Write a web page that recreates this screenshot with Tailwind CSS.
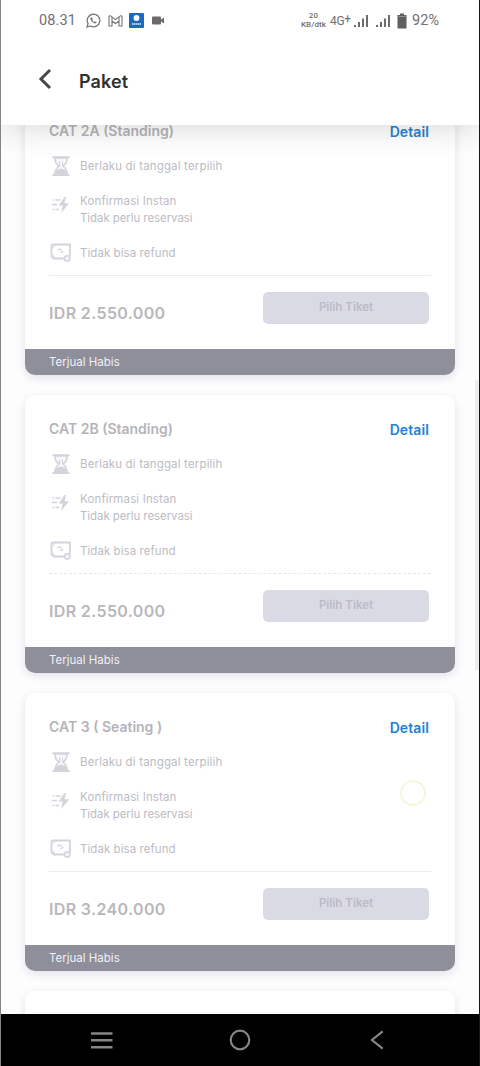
<!DOCTYPE html>
<html lang="id">
<head>
<meta charset="utf-8">
<meta name="viewport" content="width=device-width, initial-scale=1">
<title>Paket</title>
<script src="https://cdn.jsdelivr.net/npm/@tailwindcss/browser@4"></script>
</head>
<body class="bg-white">
<svg class="hidden">
  <symbol id="hourglass" viewBox="0 0 22 22">
    <path d="M3.500 2.200h17M3.500 20h17" stroke="#d3d3dc" stroke-width="2" fill="none"/>
    <path d="M6 3c0 5 1.500 6 4 8-2.500 2-4 4-4 8h12c0-4-1.500-6-4-8 2.500-2 4-3 4-8z" fill="#f8f8fb" stroke="#d3d3dc" stroke-width="1.600"/>
    <path d="M5 19.500c.5-3.500 3-5 7-6 4 1 6.500 2.500 7 6zM10 6.500h1.200v5H10zM13 6.500h1v4l-1 1z" fill="#d3d3dc"/>
  </symbol>
  <symbol id="bolt" viewBox="0 0 22 22">
    <path d="M15.500 3 9.700 11.500h4L12.200 19 20 9.200h-4.500L17 3z" fill="#d3d3dc"/>
    <path d="M4 6h.5M7 6h4M3.500 10.500h4M4 15.500h.5M7 15.500h2.500" stroke="#d3d3dc" stroke-width="1.500" stroke-linecap="round"/>
  </symbol>
  <symbol id="refund" viewBox="0 0 22 22">
    <path d="M15 17.500H5L2.500 15.500V4.500l1-1H21V15" fill="none" stroke="#d3d3dc" stroke-width="1.800"/>
    <path d="M5.500 4.500a3 3 0 0 1-2 2.500M5.500 16.500a3 3 0 0 0-2-2.500" fill="none" stroke="#d3d3dc" stroke-width="1"/>
    <path d="M8.500 9.500c1-2 3-1.500 4-.3M11.500 11.500c1 0 2-.5 2.500-1.500" fill="none" stroke="#d3d3dc" stroke-width="1.400"/>
    <circle cx="18.200" cy="17.400" r="2.700" fill="#f5f5f9" stroke="#d3d3dc" stroke-width="1.500"/>
  </symbol>
</svg>
<div class="relative flex h-[1066px] w-[480px] flex-col overflow-hidden border-l border-[#858585] bg-[#fdfdfe] font-['Inter',sans-serif]">
  <header class="z-10 h-[125px] shrink-0 bg-white shadow-[0_2px_32px_rgba(0,0,0,0.16)]">
    <div class="flex h-[41px] items-center pl-[38px] font-['Roboto',sans-serif] text-[#707070]">
      <span class="w-[37px] text-[14.5px] tracking-[0.1px] whitespace-nowrap">08.31</span>
      <svg class="ml-[10px] h-[15px] w-[15px]" viewBox="0 0 15 15" fill="none" stroke="#777"><path d="M1 14l1-3.500a6.300 6.300 0 1 1 2.500 2.500z" stroke-width="1.300"/><path d="M5 4.200c-1 1.500 0 3.300 1.300 4.600 1.400 1.300 3.200 2 4.200.8l-1.600-1.200-1 .8C7 8.600 6.500 8 6 7l.8-.9z" fill="#777" stroke-width=".4"/></svg>
      <svg class="ml-[7px] h-[12px] w-[15px]" viewBox="0 0 15 12" fill="none" stroke="#777" stroke-width="1.100"><path d="M1 11V2c0-1.200 1.200-1.500 2-.9l4.500 3.500L12 1.100c.8-.6 2-.3 2 .9v9h-3V6L7.500 8.500 4 6v5zM4 6V2M11 6V2"/></svg>
      <svg class="ml-[6px] h-[15px] w-[15px]" viewBox="0 0 15 15"><rect width="15" height="15" rx="1" fill="#1c68c2"/><circle cx="7.500" cy="5" r="2.900" fill="#fff"/><path d="M3 11h9" stroke="#a9c9ee" stroke-width="2" stroke-dasharray="1.500 .4"/></svg>
      <svg class="ml-[8px] h-[9px] w-[12px]" viewBox="0 0 12 9" fill="#6a6a6a"><rect y=".5" width="9" height="8" rx="1"/><path d="M8.500 4 12 1.500v6L8.500 5z"/></svg>
      <div class="ml-[136px] w-[27px] text-center text-[8px] leading-[8.5px] font-medium tracking-[0.1px] whitespace-nowrap"><div>20</div><div>KB/dtk</div></div>
      <span class="ml-[3px] flex w-[21px] text-[12px] tracking-[-0.3px] whitespace-nowrap">4G<span class="-mt-[2px]">+</span></span>
      <svg class="ml-[3px] h-[14px] w-[15px]" viewBox="0 0 15 14" fill="#6c6c6c"><path d="M0 11h2v2H0zM4 8h2v5H4zM8 4.500h2V13H8zM12 1h2v12h-2z"/></svg>
      <svg class="ml-[7px] h-[14px] w-[15px]" viewBox="0 0 15 14" fill="#6c6c6c"><path d="M0 11h2v2H0zM4 8h2v5H4zM8 4.500h2V13H8zM12 1h2v12h-2z"/></svg>
      <svg class="ml-[6px] h-[16px] w-[10px]" viewBox="0 0 10 16" fill="#5f5f5f"><path d="M3 .5h4V2h2.500v13.500h-9V2H3z"/><path d="M1.500 3.500h7" stroke="#aaa" stroke-width=".7"/></svg>
      <span class="ml-[5px] pt-px text-[14.500px] tracking-[0.1px] whitespace-nowrap">92%</span>
    </div>
    <div class="flex h-[80px] items-center pl-[37px]">
      <svg class="-mt-[5px] h-[22px] w-[14px]" viewBox="0 0 14 22" fill="none" stroke="#484848" stroke-width="3"><path d="M12 2 3 11l9 9"/></svg>
      <h1 class="ml-[27px] pt-px text-[18px] font-semibold tracking-[0.1px] text-[#303030]">Paket</h1>
    </div>
  </header>

  <main class="-mt-[28px] flex flex-1 flex-col gap-[20px] overflow-hidden px-[24px]">
    <section class="h-[278px] w-[430px] shrink-0 overflow-hidden rounded-[10px] bg-white shadow-[0_3px_9px_rgba(60,60,110,0.14)]">
      <div class="flex h-[252px] flex-col px-[24px] pt-[24px]">
        <div class="flex h-[20px] items-start justify-between pr-[2px] leading-[19px]"><h2 class="text-[14px] font-semibold text-[#b4b4b8]">CAT 2A (Standing)</h2><a class="pt-px text-[14px] font-semibold tracking-[0.1px] text-[#2581d6]">Detail</a></div>
        <div class="mt-[14px] flex h-[22px] items-center gap-[9px]"><svg class="h-[22px] w-[22px]"><use href="#hourglass"/></svg><span class="pt-[2px] text-[11.5px] tracking-[0.16px] text-[#bcbcc4]">Berlaku di tanggal terpilih</span></div>
        <div class="mt-[16px] flex h-[34px] gap-[9px]"><svg class="mt-px h-[22px] w-[22px]"><use href="#bolt"/></svg><p class="text-[11.5px] leading-[17px] text-[#bcbcc4]"><span class="tracking-[0.14px]">Konfirmasi Instan</span><br><span class="tracking-[-0.08px]">Tidak perlu reservasi</span></p></div>
        <div class="mt-[14px] flex h-[22px] items-center gap-[9px]"><svg class="h-[22px] w-[22px]"><use href="#refund"/></svg><span class="pt-[3px] text-[11.5px] tracking-[0.06px] text-[#bcbcc4]">Tidak bisa refund</span></div>
        <div class="mt-[12px] h-px bg-[#ebebf0]"></div>
        <div class="mt-[16px] flex h-[32px] items-center justify-between pr-[2px]"><span class="mt-[9px] text-[16px] font-semibold tracking-[0.35px] text-[#b8b8bc]">IDR 2.550.000</span><button class="h-[32px] w-[166px] rounded-[5px] bg-[#dadae5] text-[11.5px] font-semibold text-[#bbbbc7]">Pilih Tiket</button></div>
      </div>
      <div class="flex h-[26px] items-center bg-[#8f8e9b] px-[24px] pt-px text-[11.5px] text-[#f1f1f6]">Terjual Habis</div>
    </section>

    <section class="h-[278px] w-[430px] shrink-0 overflow-hidden rounded-[10px] bg-white shadow-[0_3px_9px_rgba(60,60,110,0.14)]">
      <div class="flex h-[252px] flex-col px-[24px] pt-[24px]">
        <div class="flex h-[20px] items-start justify-between pr-[2px] leading-[19px]"><h2 class="text-[14px] font-semibold text-[#b4b4b8]">CAT 2B (Standing)</h2><a class="pt-px text-[14px] font-semibold tracking-[0.1px] text-[#2581d6]">Detail</a></div>
        <div class="mt-[14px] flex h-[22px] items-center gap-[9px]"><svg class="h-[22px] w-[22px]"><use href="#hourglass"/></svg><span class="pt-[2px] text-[11.5px] tracking-[0.16px] text-[#bcbcc4]">Berlaku di tanggal terpilih</span></div>
        <div class="mt-[16px] flex h-[34px] gap-[9px]"><svg class="mt-px h-[22px] w-[22px]"><use href="#bolt"/></svg><p class="text-[11.5px] leading-[17px] text-[#bcbcc4]"><span class="tracking-[0.14px]">Konfirmasi Instan</span><br><span class="tracking-[-0.08px]">Tidak perlu reservasi</span></p></div>
        <div class="mt-[14px] flex h-[22px] items-center gap-[9px]"><svg class="h-[22px] w-[22px]"><use href="#refund"/></svg><span class="pt-[3px] text-[11.5px] tracking-[0.06px] text-[#bcbcc4]">Tidak bisa refund</span></div>
        <div class="mt-[12px] border-t border-dashed border-[#e6e6ec]"></div>
        <div class="mt-[16px] flex h-[32px] items-center justify-between pr-[2px]"><span class="mt-[9px] text-[16px] font-semibold tracking-[0.35px] text-[#b8b8bc]">IDR 2.550.000</span><button class="h-[32px] w-[166px] rounded-[5px] bg-[#dadae5] text-[11.5px] font-semibold text-[#bbbbc7]">Pilih Tiket</button></div>
      </div>
      <div class="flex h-[26px] items-center bg-[#8f8e9b] px-[24px] pt-px text-[11.5px] text-[#f1f1f6]">Terjual Habis</div>
    </section>

    <section class="relative h-[278px] w-[430px] shrink-0 overflow-hidden rounded-[10px] bg-white shadow-[0_3px_9px_rgba(60,60,110,0.14)]">
      <div class="flex h-[252px] flex-col px-[24px] pt-[24px]">
        <div class="flex h-[20px] items-start justify-between pr-[2px] leading-[19px]"><h2 class="text-[14px] font-semibold text-[#b4b4b8]">CAT 3 ( Seating )</h2><a class="pt-px text-[14px] font-semibold tracking-[0.1px] text-[#2581d6]">Detail</a></div>
        <div class="mt-[14px] flex h-[22px] items-center gap-[9px]"><svg class="h-[22px] w-[22px]"><use href="#hourglass"/></svg><span class="pt-[2px] text-[11.5px] tracking-[0.16px] text-[#bcbcc4]">Berlaku di tanggal terpilih</span></div>
        <div class="mt-[16px] flex h-[34px] gap-[9px]"><svg class="mt-px h-[22px] w-[22px]"><use href="#bolt"/></svg><p class="text-[11.5px] leading-[17px] text-[#bcbcc4]"><span class="tracking-[0.14px]">Konfirmasi Instan</span><br><span class="tracking-[-0.08px]">Tidak perlu reservasi</span></p></div>
        <div class="mt-[14px] flex h-[22px] items-center gap-[9px]"><svg class="h-[22px] w-[22px]"><use href="#refund"/></svg><span class="pt-[3px] text-[11.5px] tracking-[0.06px] text-[#bcbcc4]">Tidak bisa refund</span></div>
        <div class="mt-[12px] h-px bg-[#ebebf0]"></div>
        <div class="mt-[16px] flex h-[32px] items-center justify-between pr-[2px]"><span class="mt-[9px] text-[16px] font-semibold tracking-[0.35px] text-[#b8b8bc]">IDR 3.240.000</span><button class="h-[32px] w-[166px] rounded-[5px] bg-[#dadae5] text-[11.5px] font-semibold text-[#bbbbc7]">Pilih Tiket</button></div>
      </div>
      <div class="flex h-[26px] items-center bg-[#8f8e9b] px-[24px] pt-px text-[11.5px] text-[#f1f1f6]">Terjual Habis</div>
      <div class="absolute top-[87px] left-[375px] h-[26px] w-[26px] rounded-full border-2 border-[#f7f6da]"></div>
    </section>

    <section class="h-[278px] w-[430px] shrink-0 rounded-[10px] bg-white shadow-[0_3px_9px_rgba(60,60,110,0.14)]"></section>
  </main>

  <div class="absolute top-[380px] right-px h-[290px] w-[4px] bg-[#eeeef1]"></div>
  <div class="absolute top-0 right-0 z-20 h-full w-px bg-[#15171c]"></div>
  <nav class="z-10 -ml-px flex h-[52px] shrink-0 items-center bg-black pl-[90px]">
    <svg class="h-[20px] w-[23px]" viewBox="0 0 23 20" stroke="#858585" stroke-width="2.500"><path d="M1 3.500h21.500M1 10.300h21.500M1 17.200h21.500"/></svg>
    <svg class="ml-[116px] h-[22px] w-[22px]" viewBox="0 0 22 22" fill="none" stroke="#858585" stroke-width="2.200"><circle cx="11" cy="11" r="9.300"/></svg>
    <svg class="ml-[119px] h-[20px] w-[14px]" viewBox="0 0 14 20" fill="none" stroke="#858585" stroke-width="2.200"><path d="M12.700 1.300 2 10l10.700 8.700"/></svg>
  </nav>
</div>
</body>
</html>
